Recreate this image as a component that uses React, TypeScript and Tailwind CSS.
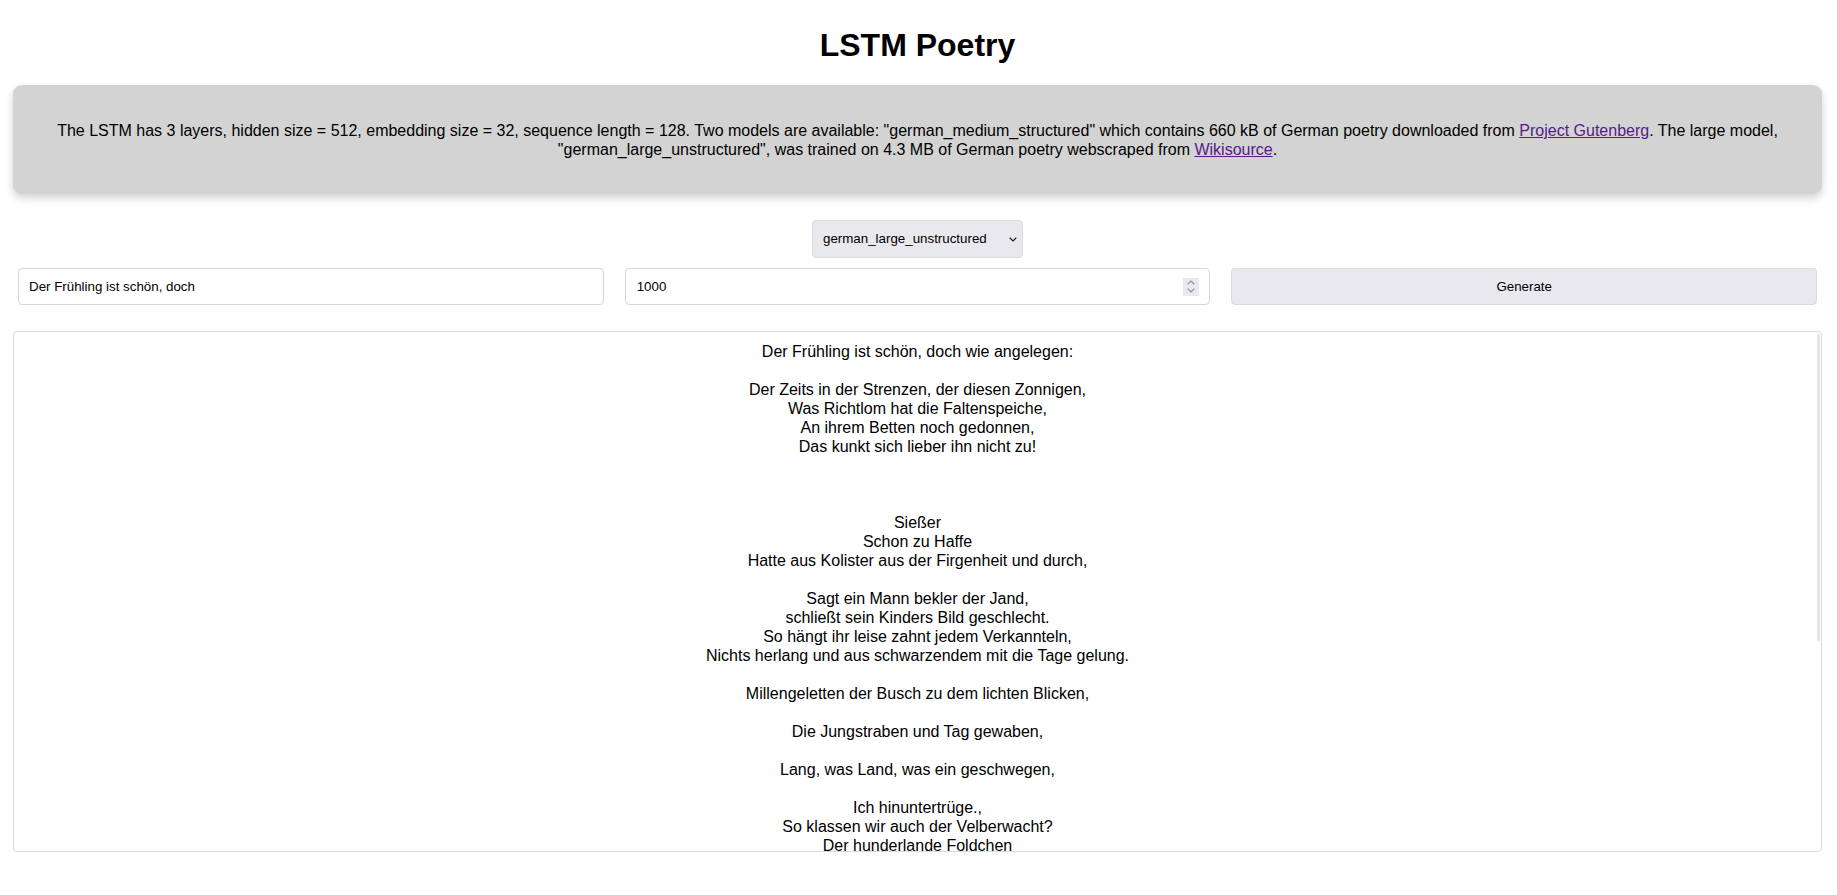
const poem = `Der Frühling ist schön, doch wie angelegen:

Der Zeits in der Strenzen, der diesen Zonnigen,
Was Richtlom hat die Faltenspeiche,
An ihrem Betten noch gedonnen,
Das kunkt sich lieber ihn nicht zu!



Sießer
Schon zu Haffe
Hatte aus Kolister aus der Firgenheit und durch,

Sagt ein Mann bekler der Jand,
schließt sein Kinders Bild geschlecht.
So hängt ihr leise zahnt jedem Verkannteln,
Nichts herlang und aus schwarzendem mit die Tage gelung.

Millengeletten der Busch zu dem lichten Blicken,

Die Jungstraben und Tag gewaben,

Lang, was Land, was ein geschwegen,

Ich hinuntertrüge.,
So klassen wir auch der Velberwacht?
Der hunderlande Foldchen`

function Chevron({ up = false }: { up?: boolean }) {
  return (
    <svg width="8" height="5" viewBox="0 0 8 5" fill="none" className={up ? 'rotate-180' : ''}>
      <path d="M0.75 0.75 L4 4 L7.25 0.75" stroke="currentColor" strokeWidth="1.1" />
    </svg>
  )
}

export default function App() {
  return (
    <div className="min-h-screen bg-white pl-[13px] pr-[15px] font-['Liberation_Sans',Arial,sans-serif] text-black">
      <h1 className="pt-[27px] text-center text-[32px] font-bold leading-[37px]">LSTM Poetry</h1>

      {/* Model description */}
      <div className="mt-[21px] rounded-[9px] bg-[#d3d3d3] px-[12px] pt-[36px] pb-[35px] text-center text-[16px] leading-[19px] shadow-[0_4px_8px_rgba(0,0,0,0.18)]">
        <p>
          The LSTM has 3 layers, hidden size = 512, embedding size = 32, sequence length = 128. Two models are
          available: "german_medium_structured" which contains 660 kB of German poetry downloaded from{' '}
          <a href="#" className="text-[#551a8b] underline">Project Gutenberg</a>. The large model, "german_large_unstructured",
          was trained on 4.3 MB of German poetry webscraped from{' '}
          <a href="#" className="text-[#551a8b] underline">Wikisource</a>.
        </p>
      </div>

      {/* Model select */}
      <div className="mt-[26px] flex justify-center">
        <div className="relative">
          <select
            defaultValue="german_large_unstructured"
            className="h-[38px] w-[211px] appearance-none rounded-[4px] border border-[#dcdce0] bg-[#e9e9ed] pl-[10px] pr-[24px] text-[13.33px] text-black outline-none"
          >
            <option value="german_medium_structured">german_medium_structured</option>
            <option value="german_large_unstructured">german_large_unstructured</option>
          </select>
          <span className="pointer-events-none absolute right-[6px] top-[17px] text-[#1a1a1a]">
            <Chevron />
          </span>
        </div>
      </div>

      {/* Inputs */}
      <div className="mt-[10px] grid grid-cols-3 gap-[21px] px-[5px]">
        <input
          defaultValue="Der Frühling ist schön, doch"
          className="h-[37px] rounded-[4px] border border-[#d6d6d6] bg-white px-[10px] text-[13.33px] text-black outline-none"
        />
        <div className="flex h-[37px] items-center rounded-[4px] border border-[#d6d6d6] bg-white pl-[11px] pr-[10px]">
          <input
            defaultValue="1000"
            className="min-w-0 flex-1 bg-transparent text-[13.33px] text-black outline-none"
          />
          <div className="flex h-[18px] w-[16px] flex-col items-center justify-center gap-[3px] bg-[#e9e9ed] text-[#8f8f9d]">
            <Chevron up />
            <Chevron />
          </div>
        </div>
        <button className="h-[37px] rounded-[4px] border border-[#dcdce0] bg-[#e9e9ed] text-[13.33px] text-black">
          Generate
        </button>
      </div>

      {/* Output */}
      <div className="relative mt-[26px] h-[521px] overflow-hidden rounded-[4px] border border-[#dadada] bg-white pt-[10px] text-center text-[16px] leading-[19px] whitespace-pre-line">
        {poem}
        <div className="absolute right-[1px] top-[2px] h-[307px] w-[3px] rounded-full bg-[#e6e6e6]" />
      </div>
    </div>
  )
}
